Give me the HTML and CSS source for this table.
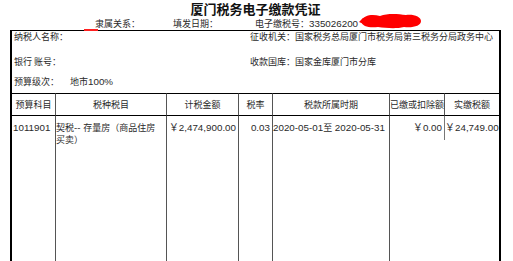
FILE: index.html
```html
<!DOCTYPE html>
<html lang="zh-CN">
<head>
<meta charset="utf-8">
<title>厦门税务电子缴款凭证</title>
<link rel="stylesheet" href="styles.css">
</head>
<body>
<div class="page">
  <div class="title">厦门税务电子缴款凭证</div>
  <div class="meta">
    <span class="m1">隶属关系：</span>
    <span class="m2">填发日期：</span>
    <span class="m3">电子缴税号：<span class="n">335026200</span></span>
    <svg class="scribble" width="66" height="16" viewBox="0 0 66 16">
      <path d="M3 8 C6 2 14 1 22 3 C30 0 40 1 48 2 C56 1 63 4 63 8 C63 13 55 15 46 14 C38 16 28 15 20 14 C12 15 4 14 3 8 Z" fill="#ff0000"/>
      <path d="M1 9 L5 5 L8 12 Z" fill="#ff0000"/>
    </svg>
  </div>
  <div class="box">
    <span class="mark"></span>
    <div class="info">
      <div class="info-row">
        <div>纳税人名称：</div>
        <div>征收机关：国家税务总局厦门市税务局第三税务分局政务中心</div>
      </div>
      <div class="info-row r2">
        <div>银行 账号：</div>
        <div>收款国库：国家金库厦门市分库</div>
      </div>
      <div class="info-row r3">
        <div><span class="lbl">预算级次：</span>地市<span class="n">100%</span></div>
        <div></div>
      </div>
    </div>
    <div class="grid">
      <div class="th">预算科目</div>
      <div class="th">税种税目</div>
      <div class="th">计税金额</div>
      <div class="th">税率</div>
      <div class="th">税款所属时期</div>
      <div class="th">已缴或扣除额</div>
      <div class="th last">实缴税额</div>

      <div class="td c1"><span class="n">1011901</span></div>
      <div class="td c2">契税<span class="n">-- </span>存量房（商品住房<br>买卖）</div>
      <div class="td right"><span class="n">￥2,474,900.00</span></div>
      <div class="td right"><span class="n">0.03</span></div>
      <div class="td c5"><span class="n">2020-05-01</span>至<span class="n"> 2020-05-31</span></div>
      <div class="td c6"><div class="inner"><span class="n">￥0.00</span></div></div>
      <div class="td c7 last"><span class="n">￥24,749.00</span></div>
    </div>
  </div>
</div>
</body>
</html>
```

FILE: styles.css
```css
html, body {
  margin: 0;
  padding: 0;
  background: #ffffff;
  overflow: hidden;
}
body {
  font-family: "Noto Sans CJK SC", "Liberation Sans", sans-serif;
  font-size: 9px;
  color: #2a2a2a;
}
.page {
  width: 513px;
  height: 261px;
  overflow: hidden;
}
.title {
  margin-left: 10px;
  width: 491px;
  height: 18px;
  line-height: 18px;
  text-align: center;
  font-size: 13px;
  font-weight: bold;
  color: #111111;
}
.meta {
  position: relative;
  display: flex;
  height: 12px;
  line-height: 12px;
  padding-left: 95px;
}
.m1 { width: 78px; }
.m2 { width: 82px; }
.n {
  font-family: "Liberation Sans", sans-serif;
  font-size: 9.8px;
}
.scribble {
  position: absolute;
  left: 358px;
  top: -5px;
}
.box {
  position: relative;
  margin-left: 10px;
  width: 491px;
  height: 240px;
  box-sizing: border-box;
  border-top: 1px solid #000;
  border-left: 2px solid #000;
  border-right: 2px solid #000;
}
.mark {
  position: absolute;
  left: 72px;
  top: -2px;
  width: 14px;
  height: 2px;
  background: #ff2020;
}
.info {
  display: flex;
  flex-direction: column;
  padding: 0 0 5px 2px;
}
.info-row {
  display: grid;
  grid-template-columns: 236px 1fr;
  height: 12px;
  line-height: 12px;
  white-space: nowrap;
}
.r2 { margin-top: 13px; }
.r3 { margin-top: 8px; }
.lbl {
  display: inline-block;
  width: 56px;
}
.grid {
  display: grid;
  grid-template-columns: 44px 111px 72px 34px 117px 55px 54px;
}
.th, .td {
  box-sizing: border-box;
  border-right: 1px solid #555;
  white-space: nowrap;
}
.th {
  height: 23px;
  line-height: 21px;
  border-top: 1px solid #000;
  border-bottom: 1px solid #000;
  text-align: center;
}
.th.last, .td.last { border-right: none; }
.td {
  height: 160px;
  padding-top: 6px;
  line-height: 12px;
}
.c1 { padding-left: 1px; }
.right {
  text-align: right;
  padding-right: 2px;
}
.c5 { padding-left: 0; }
.c6 {
  border-right: none;
  padding-top: 0;
}
.c6 .inner {
  height: 24px;
  box-sizing: border-box;
  padding-top: 6px;
  padding-right: 2px;
  text-align: right;
  border-right: 1px solid #777;
}
.c7 {
  text-align: right;
  padding-right: 1px;
}
```
